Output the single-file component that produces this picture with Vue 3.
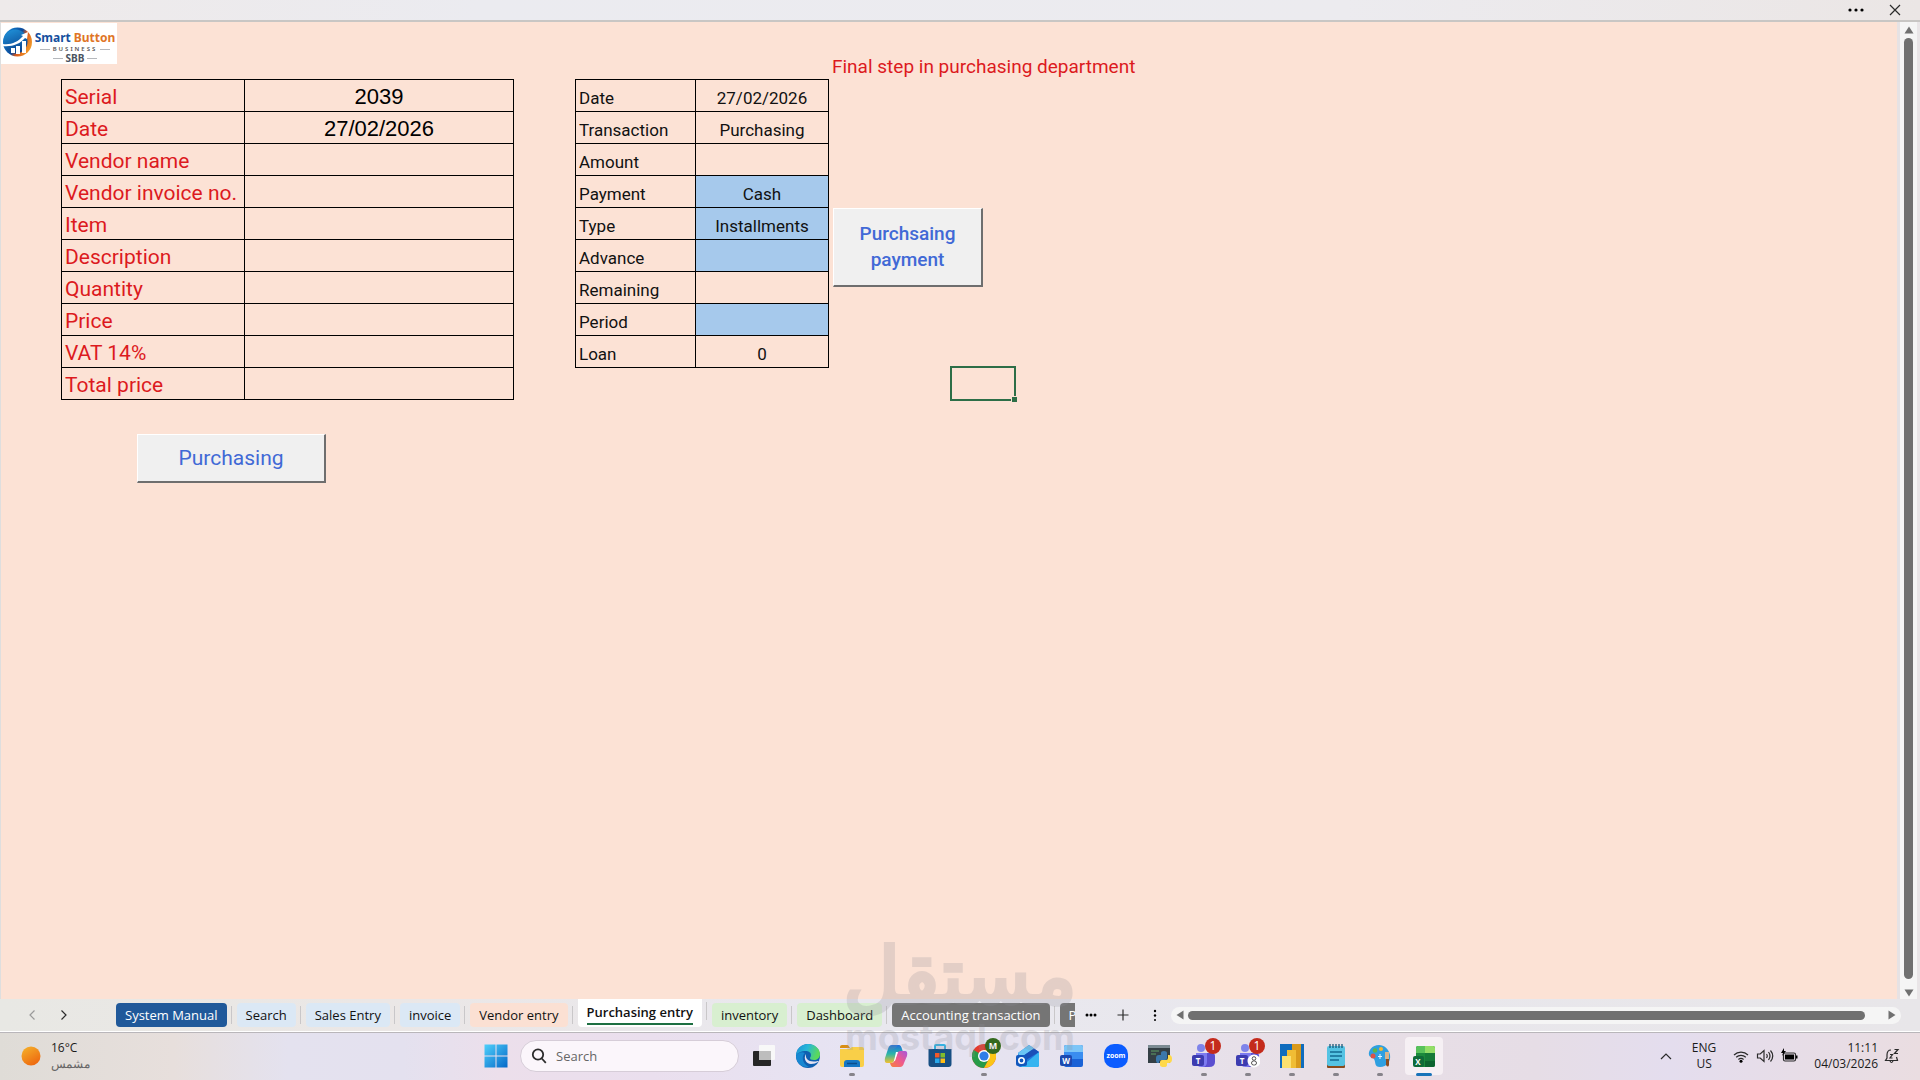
<template>
  <div class="window">
    <header class="titlebar">
      <button class="bar-btn" aria-label="More options">
        <svg width="18" height="18" viewBox="0 0 18 18"><circle cx="3" cy="9" r="1.6" /><circle cx="9" cy="9" r="1.6" /><circle cx="15" cy="9" r="1.6" /></svg>
      </button>
      <button class="bar-btn" aria-label="Close">
        <svg width="12" height="12" viewBox="0 0 12 12"><path d="M1 1l10 10M11 1L1 11" class="line" /></svg>
      </button>
    </header>

    <main class="workspace">
      <section class="sheet">
        <div class="logo">
          <svg width="32" height="32" viewBox="0 0 32 32">
            <defs>
              <linearGradient id="ring" x1="0" y1="0.2" x2="1" y2="0.7">
                <stop offset="0" stop-color="#1389d6" />
                <stop offset="0.5" stop-color="#0c4a9c" />
                <stop offset="0.65" stop-color="#d9581c" />
                <stop offset="1" stop-color="#f5a32c" />
              </linearGradient>
              <linearGradient id="globe" x1="0" y1="0" x2="0.4" y2="1">
                <stop offset="0" stop-color="#2196dd" />
                <stop offset="1" stop-color="#0b4590" />
              </linearGradient>
            </defs>
            <circle cx="16.500" cy="15" r="14.500" fill="url(#ring)" />
            <circle cx="14.500" cy="14.500" r="12" fill="url(#globe)" />
            <path d="M2 17c8 1 15-2 20-8l-2-1 7-3-1 7-2-1c-5 6-13 9-22 8z" fill="#fff" />
            <path d="M10 21h4v5h-4zM15 19h4v8h-4zM21 14h4v12h-4z" fill="#fff" />
          </svg>
          <div class="logo-text">
            <strong><span class="blue">Smart</span> <span class="orange">Button</span></strong>
            <span class="logo-sub">BUSINESS</span>
            <span class="logo-sbb">SBB</span>
          </div>
        </div>

        <div class="entry">
          <table class="purchase">
            <tbody>
              <tr v-for="row in purchase" :key="row.label">
                <th scope="row">{{ row.label }}</th>
                <td>{{ row.value }}</td>
              </tr>
            </tbody>
          </table>
          <button class="form-btn purchase-btn">Purchasing</button>
        </div>

        <table class="payment">
          <tbody>
            <tr v-for="row in payment" :key="row.label">
              <th scope="row">{{ row.label }}</th>
              <td :class="{ choice: row.choice }">{{ row.value }}</td>
            </tr>
          </tbody>
        </table>

        <div class="final">
          <h1>Final step in purchasing department</h1>
          <button class="form-btn payment-btn">Purchsaing payment</button>
          <div class="cursor-cell"></div>
        </div>
      </section>

      <div class="vscroll">
        <svg width="10" height="8" viewBox="0 0 10 8"><path d="M5 .5l4.500 7h-9z" /></svg>
        <div class="thumb"></div>
        <svg width="10" height="8" viewBox="0 0 10 8"><path d="M5 7.500l4.500-7h-9z" /></svg>
      </div>
    </main>

    <nav class="tabbar">
      <div class="tab-arrows">
        <button class="bar-btn" aria-label="Previous sheets">
          <svg width="8" height="12" viewBox="0 0 8 12"><path d="M6.500 1.500L2 6l4.500 4.500" class="line dim" /></svg>
        </button>
        <button class="bar-btn" aria-label="Next sheets">
          <svg width="8" height="12" viewBox="0 0 8 12"><path d="M1.500 1.500L6 6l-4.500 4.500" class="line" /></svg>
        </button>
      </div>
      <div class="tabs">
        <button v-for="tab in tabs" :key="tab.name" class="tab" :class="tab.tone">
          <span>{{ tab.name }}</span>
        </button>
      </div>
      <div class="tab-tools">
        <button class="bar-btn" aria-label="All sheets">
          <svg width="12" height="12" viewBox="0 0 12 12"><circle cx="2" cy="6" r="1.5" /><circle cx="6" cy="6" r="1.5" /><circle cx="10" cy="6" r="1.5" /></svg>
        </button>
        <button class="bar-btn" aria-label="New sheet">
          <svg width="12" height="12" viewBox="0 0 12 12"><path d="M6 0.500v11M0.500 6h11" class="line" /></svg>
        </button>
        <button class="bar-btn" aria-label="Resize">
          <svg width="12" height="12" viewBox="0 0 12 12"><circle cx="6" cy="2" r="1.200" /><circle cx="6" cy="6.500" r="1.200" /><circle cx="6" cy="11" r="1" /></svg>
        </button>
      </div>
      <div class="hscroll">
        <svg width="8" height="10" viewBox="0 0 8 10"><path d="M.5 5l7-4.500v9z" /></svg>
        <div class="thumb"></div>
        <svg width="8" height="10" viewBox="0 0 8 10"><path d="M7.500 5l-7-4.500v9z" /></svg>
      </div>
    </nav>

    <footer class="taskbar">
      <div class="weather">
        <svg width="20" height="20" viewBox="0 0 20 20">
          <defs>
            <linearGradient id="sun" x1="0" y1="0" x2="0.6" y2="1">
              <stop offset="0" stop-color="#f5b52c" />
              <stop offset="1" stop-color="#ee6a10" />
            </linearGradient>
          </defs>
          <circle cx="10" cy="10" r="9.500" fill="url(#sun)" />
        </svg>
        <div>
          <div>16°C</div>
          <div class="muted" lang="ar">مشمس</div>
        </div>
      </div>

      <div class="apps">
        <button class="app" aria-label="Start">
          <svg width="24" height="24" viewBox="0 0 24 24">
            <defs>
              <linearGradient id="win" x1="0" y1="0" x2="1" y2="1">
                <stop offset="0" stop-color="#4fd0fb" />
                <stop offset="1" stop-color="#0468c8" />
              </linearGradient>
            </defs>
            <path d="M.5.500h11v11H.5zM12.500.500h11v11h-11zM.5 12.500h11v11H.5zM12.500 12.500h11v11h-11z" fill="url(#win)" />
          </svg>
        </button>
        <label class="search">
          <svg width="16" height="16" viewBox="0 0 16 16"><circle cx="7" cy="6.500" r="5.200" class="lens" /><path d="M10.800 10.500l4 4.300" class="lens" /></svg>
          <input type="text" placeholder="Search" aria-label="Search" />
        </label>

        <button class="app" aria-label="Task view">
          <svg width="24" height="24" viewBox="0 0 24 24">
            <rect x="1" y="7" width="18" height="15" rx="1" fill="#262626" />
            <rect x="7" y="1" width="16" height="15" rx="1" fill="#f8f8f8" />
            <rect x="7" y="7" width="12" height="9" fill="#bdbdbd" />
          </svg>
        </button>
        <button class="app" aria-label="Edge">
          <svg width="24" height="24" viewBox="0 0 24 24">
            <defs>
              <linearGradient id="edgeTop" x1="0" y1="0" x2="1" y2="0.3">
                <stop offset="0" stop-color="#1b8fd6" />
                <stop offset="0.500" stop-color="#27b7d8" />
                <stop offset="1" stop-color="#5bd95a" />
              </linearGradient>
            </defs>
            <circle cx="12" cy="12" r="12" fill="#0f5fb0" />
            <path d="M0 12C0 5 5 0 12 0s12 5 12 10c0 4-3 6-6 6-3 0-4-1-4-2s1-1 1-3c0-3-3-4-5-4C5 7 1 9 0 12z" fill="url(#edgeTop)" />
            <path d="M9 9c-3 2-4 10 4 14C5 24 0 18 0 12c1-3 6-5 9-3z" fill="#1787d2" />
            <path d="M10 10c-1 5 3 9 12 7 1 0 1 1 0 1-2 1-4 2-7 2-5 0-8-6-5-10z" fill="#e6e3f2" />
          </svg>
        </button>
        <button class="app running" aria-label="File Explorer">
          <svg width="24" height="24" viewBox="0 0 24 24">
            <path d="M0 3q0-2 2-2h6l2 3H0z" fill="#d98e12" />
            <path d="M0 5h9l3-2h10q2 0 2 2v16q0 2-2 2H2q-2 0-2-2z" fill="#f9cf48" />
            <path d="M4 23v-4q0-3 3-3h10q3 0 3 3v4z" fill="#1677c4" />
            <path d="M7 19.500h10" stroke="#0c4e8c" stroke-width="1.500" />
          </svg>
        </button>
        <button class="app" aria-label="Copilot">
          <svg width="24" height="24" viewBox="0 0 24 24">
            <defs>
              <linearGradient id="copA" x1="0" y1="0" x2="0" y2="1">
                <stop offset="0" stop-color="#1f6fdc" />
                <stop offset="0.500" stop-color="#2bb6a8" />
                <stop offset="1" stop-color="#f5c02d" />
              </linearGradient>
              <linearGradient id="copB" x1="1" y1="0" x2="0" y2="1">
                <stop offset="0" stop-color="#a557dd" />
                <stop offset="0.500" stop-color="#ef5a8c" />
                <stop offset="1" stop-color="#f78238" />
              </linearGradient>
            </defs>
            <path d="M8 1h7q2 0 3 4l1 3h-4q-2 0-3 3l-2 6q-1 2-3 2H3q-3 0-2-5L4 5q1-4 4-4z" fill="url(#copA)" />
            <path d="M16 23H9q-2 0-3-4h2q2 0 3-3l2-6q1-3 3-3h5q3 0 2 5l-3 7q-1 4-4 4z" fill="url(#copB)" />
            <path d="M12 8h2l-3 9h-1z" fill="#fff" />
          </svg>
        </button>
        <button class="app" aria-label="Microsoft Store">
          <svg width="24" height="24" viewBox="0 0 24 24">
            <path d="M7 6V2q0-1 1-1h8q1 0 1 1v4" fill="none" stroke="#35b2e2" stroke-width="2" />
            <path d="M0.500 5h23v15q0 3-3 3h-17q-3 0-3-3z" fill="#174f83" />
            <path d="M7 9h4.500v4.500H7z" fill="#f1592a" />
            <path d="M12.500 9H17v4.500h-4.500z" fill="#80bb2b" />
            <path d="M7 14.500h4.500V19H7z" fill="#28a8ea" />
            <path d="M12.500 14.500H17V19h-4.500z" fill="#fdbd16" />
          </svg>
        </button>
        <button class="app running" aria-label="Chrome">
          <svg width="24" height="24" viewBox="0 0 24 24">
            <circle cx="12" cy="12" r="12" fill="#e33b2e" />
            <path d="M12 12L1.600 6A12 12 0 0 0 12 24l5-9z" fill="#279b48" />
            <path d="M12 24A12 12 0 0 0 22.400 6H12l5 9z" fill="#fbc516" />
            <circle cx="12" cy="12" r="6" fill="#fff" />
            <circle cx="12" cy="12" r="4.600" fill="#2f7ee8" />
          </svg>
          <span class="badge green">M</span>
        </button>
        <button class="app" aria-label="Outlook">
          <svg width="24" height="24" viewBox="0 0 24 24">
            <path d="M2 9l11-8 10 7v13q0 2-2 2H4q-2 0-2-2z" fill="#1f78dc" />
            <path d="M2 9l11-8 5 3.500L4 14z" fill="#6ac5f5" />
            <path d="M23 8v13q0 2-2 2H5z" fill="#35b4f0" />
            <path d="M18 4.500L23 8 10 16l-6-2z" fill="#1a50b8" />
            <rect x="0" y="11" width="11" height="11" rx="2" fill="#1258bd" />
            <circle cx="5.500" cy="16.500" r="2.700" fill="none" stroke="#fff" stroke-width="1.600" />
          </svg>
        </button>
        <button class="app" aria-label="Word">
          <svg width="24" height="24" viewBox="0 0 24 24">
            <rect x="4" y="1" width="19" height="22" rx="2" fill="#1a62d6" />
            <path d="M4 8V3q0-2 2-2h15q2 0 2 2v5z" fill="#7cc5f7" />
            <path d="M4 8h19v7H4z" fill="#3a8df0" />
            <rect x="0" y="11" width="12" height="11" rx="2" fill="#1c49b0" />
            <text x="6" y="20" class="letter">W</text>
          </svg>
        </button>
        <button class="app" aria-label="Zoom">
          <svg width="24" height="24" viewBox="0 0 24 24">
            <rect width="24" height="24" rx="10" fill="#0b5cff" />
            <text x="12" y="14" class="letter small">zoom</text>
          </svg>
        </button>
        <button class="app" aria-label="Python">
          <svg width="24" height="24" viewBox="0 0 24 24">
            <rect x="0" y="1" width="22" height="18" fill="#343f45" />
            <rect x="0" y="1" width="22" height="3" fill="#7c8b93" />
            <path d="M3 7h8M3 10h5" stroke="#5e9f66" stroke-width="1" />
            <path d="M8 17v-3q0-3 3-3h2V9q0-2 3-2t3 2v5q0 2-2 2h-4q-2 0-2 3H9z" fill="#3b77ab" />
            <path d="M12 18q0-2 2-2h4q2 0 2-2v-3h1q3 0 3 4t-3 4h-2v2q0 2-3 2-4 0-4-2z" fill="#ffd94a" />
          </svg>
        </button>
        <button v-for="n in 2" :key="n" class="app running" :aria-label="'Teams ' + n">
          <svg width="24" height="24" viewBox="0 0 24 24">
            <circle cx="9" cy="4" r="4" fill="#7e84ea" />
            <path d="M8 9h12q3 0 3 3v6q0 5-6 5H9z" fill="#5b4fd0" />
            <path d="M4 9h11v9q0 5-5 5-6 0-6-5z" fill="#7d7bf0" />
            <rect x="0" y="11" width="12" height="11" rx="2" fill="#3d3cb0" />
            <text x="6" y="20" class="letter">T</text>
            <g v-if="n === 2">
              <circle cx="18" cy="17" r="6.500" fill="#fff" />
              <circle cx="18" cy="14.500" r="1.800" fill="none" stroke="#555" />
              <rect x="15.500" y="17" width="5" height="4" rx="2" fill="none" stroke="#555" />
            </g>
          </svg>
          <span class="badge red">1</span>
        </button>
        <button class="app running" aria-label="Power BI">
          <svg width="24" height="24" viewBox="0 0 24 24">
            <rect width="24" height="24" fill="#0f6cbd" />
            <rect x="12" y="0" width="9" height="24" fill="#d99a1c" />
            <rect x="7" y="6" width="9" height="18" fill="#f0bd35" />
            <rect x="2" y="12" width="9" height="12" fill="#fbe070" />
          </svg>
        </button>
        <button class="app running" aria-label="Notepad">
          <svg width="24" height="24" viewBox="0 0 24 24">
            <rect x="3" y="20" width="18" height="4" rx="1" fill="#8a4b1c" />
            <rect x="3" y="2" width="18" height="20" rx="2" fill="#55c3e3" />
            <path d="M6 0v4M9 0v4M12 0v4M15 0v4M18 0v4" stroke="#1d5878" stroke-width="1.300" />
            <path d="M6 8h12M6 12h12M6 16h9" stroke="#136a92" stroke-width="1.600" />
          </svg>
        </button>
        <button class="app running" aria-label="Paint">
          <svg width="24" height="24" viewBox="0 0 24 24">
            <path d="M11 1C4 1 0 7 1 11c1 3 4 2 5 4 2 3 0 8 6 8 7 0 11-6 10-12S16 1 11 1z" fill="#2e9fe0" />
            <circle cx="5" cy="12" r="2.500" fill="#dc5347" />
            <circle cx="7" cy="6.500" r="2.300" fill="#5fb548" />
            <circle cx="13" cy="5" r="2" fill="#f4b82c" />
            <path d="M12 10v5M10 12.500h4" stroke="#e8f7ff" />
            <path d="M17 8h4v7h-4z" fill="#d8b48c" />
            <path d="M18 15h3v6q-1 3-3 0z" fill="#8a4d22" />
          </svg>
        </button>
        <button class="app current" aria-label="Excel">
          <svg width="24" height="24" viewBox="0 0 24 24">
            <rect x="4" y="2" width="19" height="21" rx="2" fill="#1b8a3c" />
            <path d="M4 9V4q0-2 2-2h7v7z" fill="#58c25b" />
            <path d="M13 2h8q2 0 2 2v5H13z" fill="#93de67" />
            <path d="M13 9h10v8H13z" fill="#157a38" />
            <path d="M13 17h10v4q0 2-2 2h-8z" fill="#0c6430" />
            <rect x="1" y="12" width="11" height="11" rx="2" fill="#0f6b39" />
            <text x="6" y="21" class="letter">X</text>
          </svg>
        </button>
      </div>

      <div class="tray">
        <button class="bar-btn" aria-label="Hidden icons">
          <svg width="12" height="8" viewBox="0 0 12 8"><path d="M1 7l5-5 5 5" class="line" /></svg>
        </button>
        <div class="lang">ENG<br />US</div>
        <div class="status">
          <svg width="16" height="16" viewBox="0 0 16 16">
            <path d="M1 7a10 10 0 0 1 14 0M3.200 9.300a7 7 0 0 1 9.600 0M5.400 11.500a4 4 0 0 1 5.200 0" class="line" />
            <circle cx="8" cy="13.300" r="1.500" />
          </svg>
          <svg width="18" height="16" viewBox="0 0 18 16">
            <path d="M1.500 6h2.700L8 2.500v11L4.200 10H1.500zM10.500 6q1.500 2 0 4M12.500 4q3 4 0 8M14.500 2.500q4.500 5.500 0 11" class="line" />
          </svg>
          <svg width="18" height="16" viewBox="0 0 18 16">
            <rect x="2.500" y="5" width="12" height="8" rx="1.500" class="line" />
            <rect x="4" y="6.500" width="9" height="5" />
            <path d="M15 7.500h1.500v3H15zM3 0L0 5h2L1 8l4-5H3z" />
          </svg>
        </div>
        <div class="clock">11:11<br />04/03/2026</div>
        <svg width="16" height="16" viewBox="0 0 16 16">
          <path d="M7 2Q3 2 3 7v3l-1.500 2.500h12L12.500 9M6 13q1.500 3 3 0M6 6.500h2.500L6 10h2.500M10.500 1.500H14l-3.500 4H14" class="line" />
        </svg>
      </div>
    </footer>

    <div class="watermark" aria-hidden="true">
      <span class="wm-ar">مستقل</span>
      <span class="wm-en">mostaql.com</span>
    </div>
  </div>
</template>

<script setup>
const purchase = [
  { label: 'Serial', value: '2039' },
  { label: 'Date', value: '27/02/2026' },
  { label: 'Vendor name', value: '' },
  { label: 'Vendor invoice no.', value: '' },
  { label: 'Item', value: '' },
  { label: 'Description', value: '' },
  { label: 'Quantity', value: '' },
  { label: 'Price', value: '' },
  { label: 'VAT 14%', value: '' },
  { label: 'Total price', value: '' }
]

// choice = light blue cells filled in by the user
const payment = [
  { label: 'Date', value: '27/02/2026' },
  { label: 'Transaction', value: 'Purchasing' },
  { label: 'Amount', value: '' },
  { label: 'Payment', value: 'Cash', choice: true },
  { label: 'Type', value: 'Installments', choice: true },
  { label: 'Advance', value: '', choice: true },
  { label: 'Remaining', value: '' },
  { label: 'Period', value: '', choice: true },
  { label: 'Loan', value: '0' }
]

const tabs = [
  { name: 'System Manual', tone: 'navy' },
  { name: 'Search', tone: 'sky' },
  { name: 'Sales Entry', tone: 'sky' },
  { name: 'invoice', tone: 'sky' },
  { name: 'Vendor entry', tone: 'peach' },
  { name: 'Purchasing entry', tone: 'active' },
  { name: 'inventory', tone: 'mint' },
  { name: 'Dashboard', tone: 'mint' },
  { name: 'Accounting transaction', tone: 'gray' },
  { name: 'P', tone: 'gray' }
]
</script>

<style>
body {
  margin: 0;
}
</style>

<style scoped>
.window {
  position: relative;
  display: flex;
  flex-direction: column;
  height: 100vh;
  overflow: hidden;
  font-family: "Open Sans", "Noto Sans", sans-serif;
  color: #1b1b1b;
}

button {
  font-family: inherit;
  border: 0;
  padding: 0;
  background: none;
  color: inherit;
}

svg {
  display: block;
  flex: none;
}

.bar-btn {
  display: flex;
  align-items: center;
  justify-content: center;
}

.line {
  fill: none;
  stroke: #2b2b2b;
  stroke-width: 1.2;
}

.line.dim {
  stroke: #9a9a9a;
}

/* title bar */
.titlebar {
  display: flex;
  justify-content: flex-end;
  align-items: center;
  gap: 24px;
  height: 20px;
  padding-right: 19px;
  background: linear-gradient(90deg, #eeeaea, #ebebf0 25%, #ecebef 70%, #ebe6e5);
  border-bottom: 2px solid #c8c6c4;
}

/* sheet */
.workspace {
  flex: 1;
  display: flex;
  min-height: 0;
}

.sheet {
  position: relative;
  flex: 1;
  display: flex;
  align-items: flex-start;
  padding: 34px 0 0 60px;
  background: #fce2d5;
  border-left: 1px solid #dedede;
}

.logo {
  position: absolute;
  top: 1px;
  left: 0;
  display: flex;
  width: 116px;
  height: 41px;
  background: #fff;
}

.logo svg {
  margin-top: 4px;
}

.logo-text {
  flex: 1;
  display: flex;
  flex-direction: column;
  align-items: center;
  padding-top: 8px;
  font-family: "Noto Sans", sans-serif;
}

.logo-text strong {
  font-size: 12px;
  line-height: 14px;
  white-space: nowrap;
}

.blue {
  color: #164f9e;
}

.orange {
  color: #e07526;
}

.logo-sub,
.logo-sbb {
  display: flex;
  align-items: center;
  gap: 3px;
}

.logo-sub::before,
.logo-sub::after,
.logo-sbb::before,
.logo-sbb::after {
  content: "";
  width: 10px;
  border-top: 1px solid #b5b8bc;
}

.logo-sub {
  font-size: 6px;
  line-height: 8px;
  font-weight: 600;
  letter-spacing: 2px;
  color: #555;
}

.logo-sbb {
  font-size: 10px;
  line-height: 10px;
  font-weight: 700;
  color: #4a5360;
}

table {
  border-collapse: collapse;
  table-layout: fixed;
}

.entry,
.payment {
  margin-top: 23px;
}

th,
td {
  box-sizing: border-box;
  height: 32px;
  border: 1px solid #000;
  padding: 2px 3px 0;
  white-space: nowrap;
}

th {
  text-align: left;
  font-weight: 400;
}

td {
  text-align: center;
}

.purchase {
  width: 453px;
  font-size: 22px;
  line-height: 28px;
}

.purchase th {
  width: 183px;
  font-family: Roboto, sans-serif;
  font-size: 21px;
  color: #dc1a1e;
}

.purchase td {
  font-family: "Liberation Sans", sans-serif;
  color: #000;
}

.payment {
  width: 254px;
  margin-left: 61px;
  font-family: Roboto, sans-serif;
  font-size: 17px;
  line-height: 24px;
  color: #111;
}

.payment th {
  width: 120px;
}

.payment th,
.payment td {
  padding-top: 4px;
}

.choice {
  background: #a6c9ec;
}

.form-btn {
  display: block;
  box-sizing: border-box;
  background: #f0f0f0;
  border: 1px solid #fff;
  border-right: 2px solid #6e6e6e;
  border-bottom: 2px solid #6e6e6e;
  font-family: Roboto, sans-serif;
  color: #4169d6;
}

.purchase-btn {
  width: 189px;
  height: 49px;
  margin: 34px 0 0 76px;
  font-size: 21px;
}

.final {
  margin-left: 3px;
}

h1 {
  margin: 0;
  font-family: Roboto, sans-serif;
  font-size: 19px;
  line-height: 22px;
  font-weight: 400;
  color: #dc1a1e;
}

.payment-btn {
  width: 150px;
  height: 79px;
  margin: 130px 0 0 1px;
  padding: 0 24px;
  font-size: 19px;
  line-height: 26px;
  font-weight: 500;
}

.cursor-cell {
  position: relative;
  box-sizing: border-box;
  width: 66px;
  height: 35px;
  margin: 79px 0 0 118px;
  border: 2px solid #2d6e47;
}

.cursor-cell::after {
  content: "";
  position: absolute;
  right: -4px;
  bottom: -4px;
  width: 5px;
  height: 5px;
  background: #2d6e47;
  border: 1px solid #fce2d5;
}

/* scrollbars */
.vscroll {
  display: flex;
  flex-direction: column;
  align-items: center;
  gap: 4px;
  width: 17px;
  padding: 4px 0 2px;
  border-left: 3px solid #e6e2e4;
  border-right: 3px solid #e9e5e7;
  background: #f5f5f5;
}

.vscroll .thumb {
  flex: 1;
  width: 9px;
  margin-bottom: 6px;
  border-radius: 5px;
  background: #707070;
}

.vscroll svg,
.hscroll svg {
  fill: #707070;
}

/* sheet tabs */
.tabbar {
  display: flex;
  align-items: center;
  height: 32px;
  padding-bottom: 1px;
  background: linear-gradient(90deg, #e8e8e4, #ebe7e6 20%, #e9e8ef 45%, #e8e6e9);
  border-bottom: 1px solid #b9b6ba;
  box-shadow: inset 0 -1px #fff;
}

.tab-arrows {
  display: flex;
  width: 116px;
}

.tab-arrows .bar-btn {
  width: 32px;
}

.tab-arrows .bar-btn:first-child {
  margin-left: 16px;
}

.tabs {
  display: flex;
  align-items: center;
  width: 959px;
  overflow: hidden;
}

.tab {
  position: relative;
  flex: none;
  height: 24px;
  margin-right: 10px;
  padding: 0 9px;
  border-radius: 4px;
  font-size: 13px;
  line-height: 24px;
  color: #111;
}

.tab::after {
  content: "";
  position: absolute;
  top: 3px;
  right: -5px;
  height: 18px;
  border-right: 1px solid #c9c7c9;
}

.navy {
  background: #20599a;
  color: #fff;
}

.sky {
  background: #dbe8f5;
}

.peach {
  background: #fbe0d3;
}

.mint {
  background: #d8efd0;
}

.gray {
  background: #757575;
  color: #fff;
}

.active {
  height: 28px;
  margin-bottom: 4px;
  background: #fff;
  border-radius: 0 0 4px 4px;
  font-weight: 600;
}

.active span {
  display: block;
  line-height: 22px;
  border-bottom: 2px solid #1d6f42;
}

.tab-tools {
  display: flex;
}

.tab-tools .bar-btn {
  width: 32px;
}

.hscroll {
  flex: 1;
  display: flex;
  align-items: center;
  gap: 4px;
  height: 17px;
  margin-right: 19px;
  padding: 0 5px;
  border-radius: 9px;
  background: #f5f5f5;
}

.hscroll .thumb {
  flex: 1;
  height: 9px;
  margin-right: 19px;
  border-radius: 5px;
  background: #707070;
}

/* taskbar */
.taskbar {
  display: grid;
  grid-template-columns: 1fr auto 1fr;
  align-items: center;
  height: 46px;
  padding-bottom: 1px;
  font-size: 12px;
  line-height: 16px;
  background: linear-gradient(90deg, #dfdcd7, #e7dfdc 9%, #e4e2ef 15%, #e4e1ef 21%, #ecdfeb 26%, #eadfee 34%, #e6e4f3 45%, #e6e2ee 58%, #e8dfe6 68%, #e6dde6 80%, #e4ddee 87%, #eadde1);
}

.weather {
  display: flex;
  align-items: center;
  gap: 10px;
  padding-left: 21px;
}

.muted {
  color: #666;
}

.apps {
  display: flex;
  align-items: center;
}

.app {
  position: relative;
  display: flex;
  align-items: center;
  justify-content: center;
  width: 44px;
  height: 44px;
}

.running::after,
.current::after {
  content: "";
  position: absolute;
  bottom: 2px;
  left: 19px;
  width: 6px;
  height: 3px;
  border-radius: 2px;
  background: #86838a;
}

.current::before {
  content: "";
  position: absolute;
  inset: 3px;
  z-index: 0;
  border-radius: 4px;
  background: #f6f0f4;
}

.current svg {
  position: relative;
}

.current::after {
  left: 14px;
  width: 16px;
  background: #1873b9;
}

.letter {
  font-family: "Open Sans", sans-serif;
  font-size: 8px;
  font-weight: 700;
  text-anchor: middle;
  fill: #fff;
}

.small {
  font-size: 7px;
}

.badge {
  position: absolute;
  top: 4px;
  right: 5px;
  width: 16px;
  height: 16px;
  border-radius: 8px;
  font-size: 12px;
  line-height: 16px;
  text-align: center;
  color: #fff;
}

.green {
  background: #33691e;
  font-size: 9px;
  font-weight: 700;
}

.red {
  background: #c42b1c;
}

.search {
  display: flex;
  align-items: center;
  gap: 9px;
  box-sizing: border-box;
  width: 219px;
  height: 32px;
  margin: 0 3px 0 2px;
  padding: 0 10px;
  border: 1px solid #d6cdd8;
  border-radius: 16px;
  background: #fbf6fb;
}

.lens {
  fill: none;
  stroke: #2b2b2b;
  stroke-width: 1.8;
}

.search input {
  flex: 1;
  min-width: 0;
  padding: 0;
  border: 0;
  outline: 0;
  background: none;
  font-family: inherit;
  font-size: 13px;
}

.search input::placeholder {
  color: #666;
  opacity: 1;
}

.tray {
  display: flex;
  align-items: center;
  justify-content: flex-end;
  padding-right: 20px;
}

.lang {
  margin: 0 17px 0 20px;
  text-align: center;
}

.status {
  display: flex;
  gap: 7px;
  margin-right: 15px;
}

.clock {
  margin-right: 6px;
  text-align: right;
}

/* one opacity for the whole mark keeps the joined letters even */
.watermark {
  position: absolute;
  right: 0;
  bottom: 24px;
  left: 0;
  display: flex;
  flex-direction: column;
  align-items: center;
  pointer-events: none;
  color: #8c8c96;
  font-weight: 700;
  opacity: 0.22;
}

.wm-ar {
  font-family: "DejaVu Sans", sans-serif;
  font-size: 78px;
  line-height: 84px;
  font-weight: 400;
  -webkit-text-stroke: 4px #8c8c96;
}

.wm-en {
  font-family: Inter, sans-serif;
  font-size: 36px;
  line-height: 38px;
}
</style>
